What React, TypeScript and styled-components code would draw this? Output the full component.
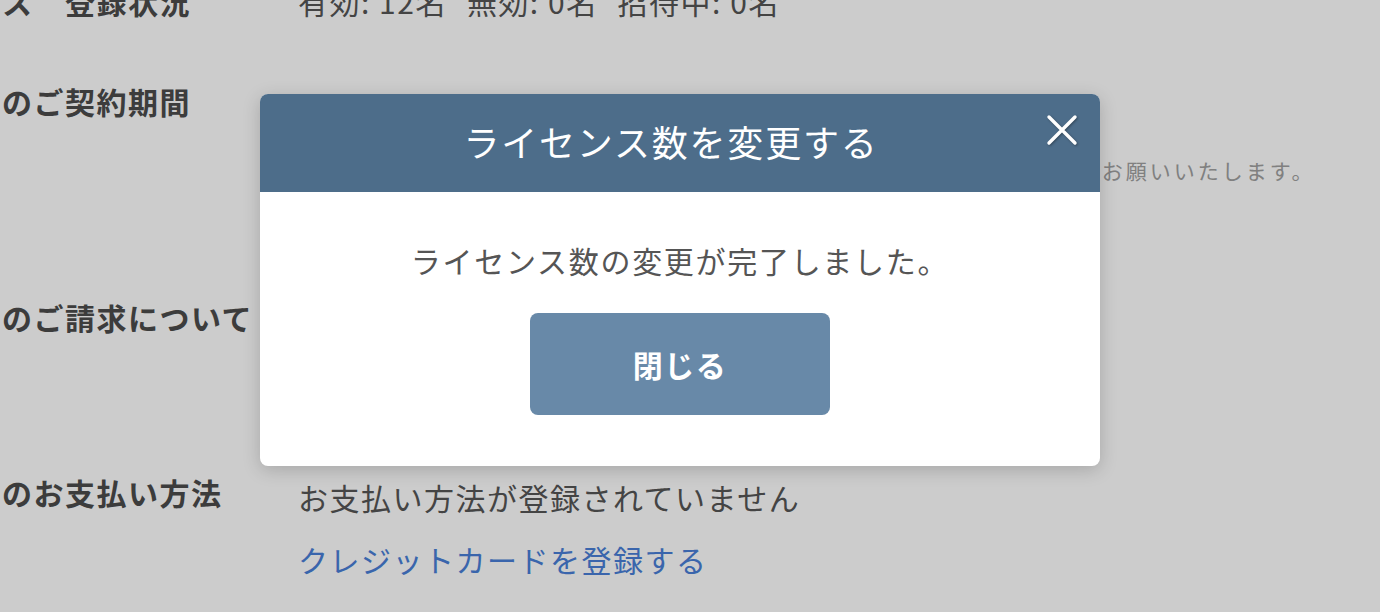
import React from 'react'
import styled, { createGlobalStyle } from 'styled-components'

const GlobalStyle = createGlobalStyle`
  html, body {
    margin: 0;
    padding: 0;
    background: #fff;
    font-family: "Noto Sans CJK JP", "Noto Sans", sans-serif;
    color: #4c4c4c;
  }
`

type Row = {
  label: string
  offset: number
  values: React.ReactNode
}

export default function App() {
  const rows: Row[] = [
    {
      label: '全ライセンス　登録状況',
      offset: 0,
      values: (
        <ValueLine>
          <Count>有効: 12名</Count>
          <Count>無効: 0名</Count>
          <Count>招待中: 0名</Count>
        </ValueLine>
      ),
    },
    {
      label: 'ライセンスのご契約期間',
      offset: 18,
      values: (
        <>
          <ValueLine>2024年4月1日 〜 2025年3月31日</ValueLine>
          <Note>※変更のライセンス数は翌月1日より適用します。不明点はサポートへ連絡お願いいたします。</Note>
          <OpenButton>ライセンス数を変更する</OpenButton>
        </>
      ),
    },
    {
      label: 'ライセンスのご請求について',
      offset: 0,
      values: (
        <>
          <ValueLine>毎月末締め・翌月末請求となります。</ValueLine>
          <ValueLine>請求書はメールにて送付されます。</ValueLine>
          <Note $gap={0}>※金額は税込表示です。</Note>
        </>
      ),
    },
    {
      label: 'ライセンスのお支払い方法',
      offset: 5,
      values: (
        <>
          <ValueLine>お支払い方法が登録されていません</ValueLine>
          <Link href="#">クレジットカードを登録する</Link>
        </>
      ),
    },
  ]

  return (
    <>
      <GlobalStyle />
      <Viewport>
        <Sheet>
          {rows.map((row, i) => (
            <InfoRow key={i}>
              <Label>{row.label}</Label>
              <Values $offset={row.offset}>{row.values}</Values>
            </InfoRow>
          ))}
        </Sheet>
        <Overlay>
          <Modal>
            <ModalHeader>
              <ModalTitle>ライセンス数を変更する</ModalTitle>
              <CloseButton aria-label="閉じる">
                <svg width="32" height="32" viewBox="0 0 32 32">
                  <path d="M3 3 L29 29 M29 3 L3 29" stroke="#fff" strokeWidth="3.4" strokeLinecap="round" />
                </svg>
              </CloseButton>
            </ModalHeader>
            <ModalBody>
              <Message>ライセンス数の変更が完了しました。</Message>
              <PrimaryButton>閉じる</PrimaryButton>
            </ModalBody>
          </Modal>
        </Overlay>
      </Viewport>
    </>
  )
}

const Viewport = styled.div`
  position: relative;
  width: 100%;
  height: 612px;
  overflow: hidden;
`

// the page is scrolled a bit: its left and top edges are out of view
const Sheet = styled.div`
  margin: -21px 0 0 -155px;
  display: flex;
  flex-direction: column;
  gap: 56px;
`

const InfoRow = styled.div`
  display: grid;
  grid-template-columns: 453px 1fr;
  align-items: start;
`

const Label = styled.div`
  font-size: 30px;
  line-height: 44px;
  font-weight: 700;
  letter-spacing: 1.5px;
  white-space: nowrap;
  color: #4c4c4c;
`

const Values = styled.div<{ $offset: number }>`
  display: flex;
  flex-direction: column;
  align-items: flex-start;
  padding-top: ${p => p.$offset}px;
`

const ValueLine = styled.div`
  display: flex;
  gap: 20px;
  font-size: 30px;
  line-height: 44px;
  letter-spacing: 1.5px;
  white-space: nowrap;
  color: #555;
`

const Count = styled.span``

const Note = styled.div<{ $gap?: number }>`
  margin-top: ${p => p.$gap ?? 14}px;
  font-size: 21px;
  line-height: 31px;
  letter-spacing: 3px;
  white-space: nowrap;
  color: #a0a0a0;
`

const OpenButton = styled.button`
  margin-top: 10px;
  height: 43px;
  padding: 0 24px;
  border: 0;
  border-radius: 8px;
  background: #6889a8;
  color: #fff;
  font: inherit;
  font-size: 24px;
`

const Link = styled.a`
  margin-top: 18px;
  font-size: 30px;
  line-height: 44px;
  letter-spacing: 1.5px;
  color: #497fd8;
  text-decoration: none;
`

const Overlay = styled.div`
  position: absolute;
  inset: 0;
  background: rgba(0, 0, 0, 0.2);
`

const Modal = styled.div`
  margin: 94px 0 0 260px;
  width: 840px;
  background: #fff;
  border-radius: 8px;
  overflow: hidden;
  box-shadow: 0 4px 18px rgba(0, 0, 0, 0.18);
`

const ModalHeader = styled.div`
  position: relative;
  height: 98px;
  padding: 0 18px 4px 0;
  box-sizing: border-box;
  display: flex;
  align-items: center;
  justify-content: center;
  background: #4d6d8a;
`

const ModalTitle = styled.h2`
  margin: 0;
  font-size: 36px;
  font-weight: 400;
  letter-spacing: 1.8px;
  color: #fff;
`

const CloseButton = styled.button`
  position: absolute;
  top: 20px;
  right: 22px;
  width: 32px;
  height: 32px;
  padding: 0;
  border: 0;
  background: none;
  display: flex;
  filter: drop-shadow(1px 1px 1px rgba(0, 0, 0, 0.35));
  cursor: pointer;
`

const ModalBody = styled.div`
  display: flex;
  flex-direction: column;
  align-items: center;
  padding: 46px 0 51px;
`

const Message = styled.p`
  margin: 0 0 31px;
  font-size: 30px;
  line-height: 44px;
  letter-spacing: 1.7px;
  color: #555;
`

const PrimaryButton = styled.button`
  width: 300px;
  height: 102px;
  border: 0;
  border-radius: 8px;
  background: #6889a8;
  color: #fff;
  font: inherit;
  font-size: 30px;
  font-weight: 700;
  letter-spacing: 1.5px;
  cursor: pointer;
`
